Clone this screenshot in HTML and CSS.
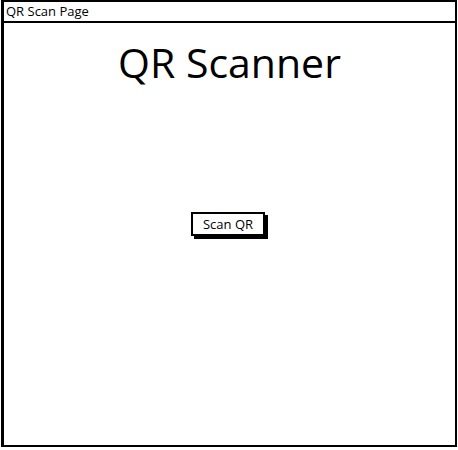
FILE: index.html
```html
<!DOCTYPE html>
<html>
<head>
<meta charset="utf-8">
<link rel="stylesheet" href="styles.css">
</head>
<body>
<div class="window">
  <div class="titlebar">QR Scan Page</div>
  <div class="content">
    <h1 class="heading">QR Scanner</h1>
    <button class="scan-btn">Scan QR</button>
  </div>
</div>
</body>
</html>
```
FILE: styles.css
```css
html, body {
  margin: 0;
  padding: 0;
  background: #fff;
}
body {
  width: 458px;
  height: 450px;
  font-family: "Open Sans", "Lato", sans-serif;
  color: #000;
}
.window {
  margin: 0 0 0 1px;
  width: 456px;
  height: 447px;
  box-sizing: border-box;
  border: 2px solid #000;
  border-left-width: 3px;
  display: flex;
  flex-direction: column;
}
.titlebar {
  height: 21px;
  box-sizing: border-box;
  border-bottom: 2px solid #000;
  font-size: 13px;
  font-weight: 500;
  line-height: 19px;
  padding-left: 2px;
}
.content {
  flex: 1;
  display: flex;
  flex-direction: column;
  align-items: center;
}
.heading {
  margin: 15px 0 0 0;
  font-size: 41px;
  font-weight: 500;
  line-height: 48px;
}
.scan-btn {
  margin-top: 126px;
  margin-right: 3px;
  width: 74px;
  height: 24px;
  box-sizing: border-box;
  border: 2px solid #000;
  background: #fff;
  box-shadow: 3px 3px 0 #000;
  font-family: inherit;
  font-size: 13px;
  font-weight: 500;
  padding: 0;
  color: #000;
}
```
